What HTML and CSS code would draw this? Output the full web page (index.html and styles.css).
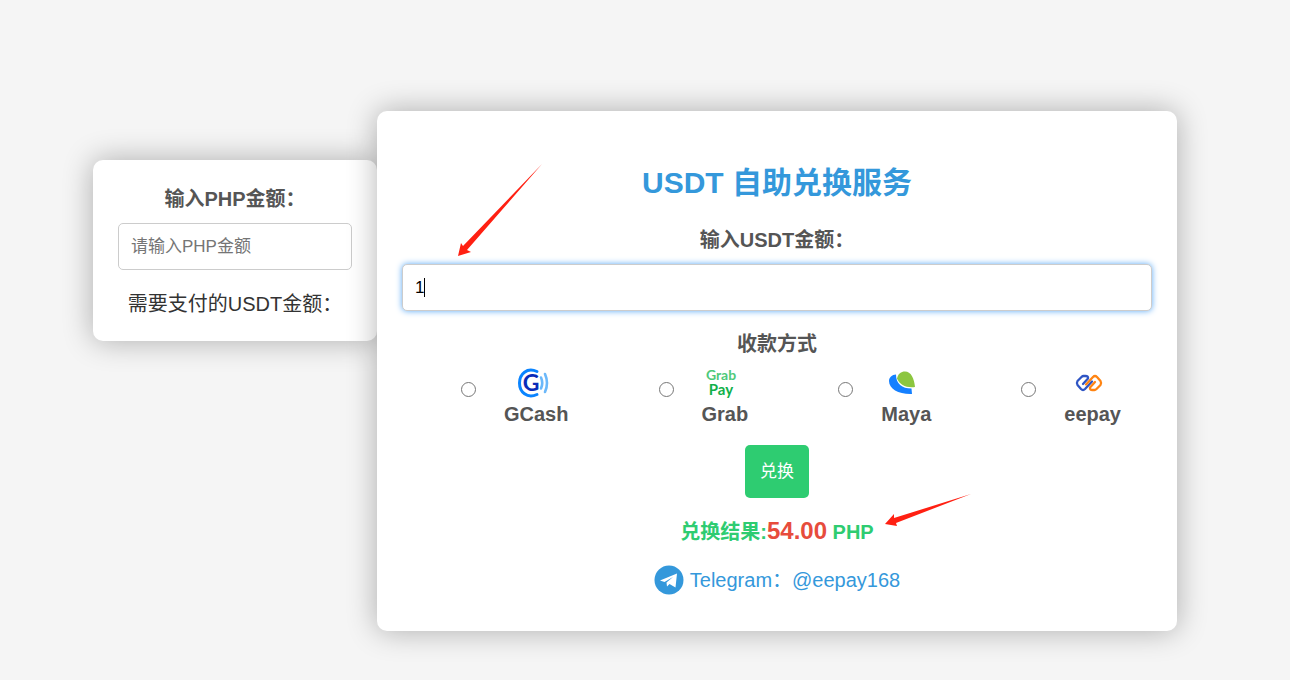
FILE: index.html
```html
<!DOCTYPE html>
<html lang="zh-CN">
<head>
    <meta charset="UTF-8" />
    <meta name="viewport" content="width=device-width, initial-scale=1" />
    <title>USDT 自助兑换服务</title>
    <link rel="stylesheet" href="styles.css">
</head>
<body>
    <div class="page">
        <div class="card reverse-card">
            <label class="field-label" for="phpAmount">输入PHP金额：</label>
            <input class="amount-input" type="text" id="phpAmount" placeholder="请输入PHP金额" />
            <p class="usdt-needed">需要支付的USDT金额：<span id="usdtResult"></span></p>
        </div>

        <form class="card exchange-card" id="exchangeForm">
            <h1 class="title">USDT 自助兑换服务</h1>

            <label class="field-label" for="usdtAmount">输入USDT金额：</label>
            <div class="input-wrap">
                <input class="amount-input active" type="text" id="usdtAmount" value="1" />
                <span class="caret"></span>
            </div>

            <h2 class="field-label">收款方式</h2>
            <div class="methods">
                <div class="method">
                    <input type="radio" name="method" id="gcash" value="gcash" />
                    <label for="gcash">
                        <svg class="method-icon" viewBox="0 0 30 30" aria-hidden="true">
                            <path d="M20 3.500C10 -1 2.500 6 2.500 15S10 31 20 26.500" fill="none" stroke="#0a84ff" stroke-width="3" stroke-linecap="round" />
                            <text class="gcash-mark" x="14" y="23" text-anchor="middle">G</text>
                            <path d="M24 9.500Q26.500 15 24 20.500" fill="none" stroke="#6bb8fa" stroke-width="2.6" stroke-linecap="round" />
                            <path d="M28 6Q32 15 28 24" fill="none" stroke="#6bb8fa" stroke-width="2.6" stroke-linecap="round" />
                        </svg>
                        <span>GCash</span>
                    </label>
                </div>
                <div class="method">
                    <input type="radio" name="method" id="grab" value="grab" />
                    <label for="grab">
                        <svg class="method-icon" viewBox="0 0 30 30" aria-hidden="true">
                            <text class="grab-mark light" x="15" y="12" text-anchor="middle">Grab</text>
                            <text class="grab-mark" x="15" y="27" text-anchor="middle">Pay</text>
                        </svg>
                        <span>Grab</span>
                    </label>
                </div>
                <div class="method">
                    <input type="radio" name="method" id="maya" value="maya" />
                    <label for="maya">
                        <svg class="method-icon" viewBox="0 0 30 30" aria-hidden="true">
                            <path d="M9 6.500C5 6.500 2 9.500 2 13C2 21 12 26.500 25 26L24.500 20.500C15 20.500 9 16 9 6.500Z" fill="#1580ff" />
                            <path d="M10 10.500C11 6 14 3.500 18 3.500C24 3.500 27 10 28 19C19 20 13 17 10 10.500Z" fill="#8cc63f" />
                        </svg>
                        <span>Maya</span>
                    </label>
                </div>
                <div class="method">
                    <input type="radio" name="method" id="eepay" value="eepay" />
                    <label for="eepay">
                        <svg class="method-icon" viewBox="0 0 30 30" aria-hidden="true" fill="none" stroke-width="2.3" stroke-linecap="round" stroke-linejoin="round">
                            <path d="M9 16L14 10.500Q14.500 8 11.500 8H9.500Q8.500 8 7.500 9L3.500 13Q2.300 15 3.500 17L7 21Q9 23 11 21L18 13.500" stroke="#2f55c4" />
                            <path d="M21 14L16 19.500Q15.500 22 18.500 22H20.500Q21.500 22 22.500 21L26.500 17Q27.700 15 26.500 13L23 9Q21 7 19 9L12 16.500" stroke="#ff8412" />
                        </svg>
                        <span>eepay</span>
                    </label>
                </div>
            </div>

            <button type="submit" class="exchange-btn">兑换</button>

            <p class="result">兑换结果:<span class="amount">54.00</span> PHP</p>

            <a class="telegram" href="https://t.me/eepay168">
                <svg class="telegram-icon" viewBox="0 0 30 30" aria-hidden="true">
                    <circle cx="15" cy="15" r="14.500" fill="#3498db" />
                    <path d="M6 15.500L23 8.500L21.500 22.500L15.500 19L13 21.500L12.500 17.500L19 12L10.500 17Z" fill="#fff" />
                </svg>
                <span>Telegram：@eepay168</span>
            </a>

            <!-- arrows pointing at the input and the result -->
            <svg class="arrow arrow-input" viewBox="0 0 84 92" aria-hidden="true">
                <path d="M84 0L9 86L13 88L0 92L3 79L5 82Z" fill="#ff2012" />
            </svg>
            <svg class="arrow arrow-result" viewBox="0 0 86 32" aria-hidden="true">
                <path d="M86 0L11 29L12 32L0 30L9 20L9 24Z" fill="#ff2012" />
            </svg>
        </form>
    </div>
</body>
</html>
```
FILE: styles.css
```css
* {
    margin: 0; padding: 0; box-sizing: border-box;
}
body {
    background: #f5f5f5;
    color: #333;
    font-family: "Liberation Sans", Arial, "Noto Sans CJK SC", sans-serif;
    font-size: 20px;
    line-height: 24px;
    text-align: center;
}
.page {
    display: flex;
    justify-content: center;
    align-items: flex-start;
    padding: 111px 20px 40px 0;
}
.card {
    background: #fff;
    border-radius: 10px;
    box-shadow: 0 0 30px rgba(0,0,0,0.3);
    padding: 25px;
}
.reverse-card {
    flex: 0 0 284px;
    margin-top: 49px;
}
.exchange-card {
    flex: 0 1 800px;
    position: relative;
    padding-bottom: 36px;
}
.title {
    color: #3498db;
    font-size: 30px;
    line-height: 40px;
    margin: 27px 0 23px;
}
.field-label {
    display: block;
    color: #555;
    font-size: 20px;
    font-weight: bold;
    line-height: 28px;
    margin-bottom: 10px;
}
.amount-input {
    display: block;
    width: 100%;
    height: 47px;
    padding: 12px;
    border: 1px solid #ccc;
    border-radius: 5px;
    font-family: inherit;
    font-size: 17px;
    color: #000;
}
.amount-input::placeholder {
    color: #757575;
}
.amount-input.active {
    box-shadow: 0 0 6px #5aa9f5;
    outline: none;
}
.usdt-needed {
    margin-top: 22px;
}
.input-wrap {
    position: relative;
    margin-bottom: 19px;
}
.caret {
    position: absolute;
    left: 22px;
    top: 14px;
    width: 1px;
    height: 19px;
    background: #000;
}
.methods {
    display: flex;
    justify-content: space-between;
    padding: 0 31px 0 59px;
    margin-bottom: 19px;
}
.method {
    display: flex;
    align-items: flex-start;
    gap: 28px;
    color: #555;
    font-weight: bold;
}
.method input {
    width: 15px;
    height: 15px;
    margin-top: 14px;
}
.method label {
    display: flex;
    flex-direction: column;
    align-items: center;
    gap: 4px;
}
.method-icon {
    width: 30px;
    height: 30px;
    margin-right: 8px;
    overflow: visible;
}
.gcash-mark {
    font: bold 23px Lato, sans-serif;
    fill: #0a2bb8;
}
.grab-mark {
    font: bold 15px Lato, sans-serif;
    fill: #10b04a;
}
.grab-mark.light {
    font-size: 14px;
    fill: #4fc97a;
}
.exchange-btn {
    background: #2ecc71;
    color: #fff;
    border: none;
    border-radius: 5px;
    padding: 15px;
    font-family: inherit;
    font-size: 17px;
    line-height: 23px;
    cursor: pointer;
}
.exchange-btn:hover {
    background: #27ae60;
}
.result {
    color: #2ecc71;
    font-weight: bold;
    line-height: 28px;
    margin: 19px 0;
}
.result .amount {
    color: #e74c3c;
    font-size: 24px;
}
.telegram {
    display: flex;
    justify-content: center;
    align-items: center;
    gap: 6px;
    color: #3498db;
    text-decoration: none;
}
.telegram-icon {
    width: 30px;
    height: 30px;
}
.arrow {
    position: absolute;
    pointer-events: none;
}
.arrow-input {
    left: 81px;
    top: 53px;
    width: 84px;
    height: 92px;
}
.arrow-result {
    left: 508px;
    top: 383px;
    width: 86px;
    height: 32px;
}
```
